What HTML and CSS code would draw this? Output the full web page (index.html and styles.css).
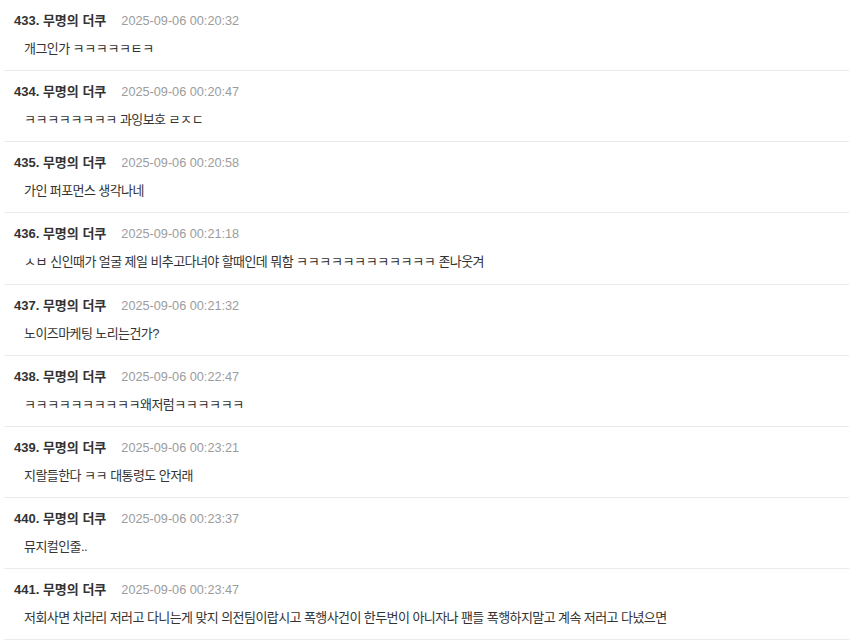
FILE: index.html
```html
<!DOCTYPE html>
<html lang="ko">
<head>
    <meta charset="UTF-8">
    <meta name="viewport" content="width=device-width, initial-scale=1.0">
    <title>댓글</title>
    <link rel="stylesheet" href="styles.css">
</head>
<body>
    <div class="comment-list">
        <div class="comment">
            <div class="comment-header"><span class="comment-name">433. 무명의 더쿠</span><span class="comment-date">2025-09-06 00:20:32</span></div>
            <div class="comment-body">개그인가 <span class="jamo">ㅋㅋㅋㅋㅋㅌㅋ</span></div>
        </div>
        <div class="comment">
            <div class="comment-header"><span class="comment-name">434. 무명의 더쿠</span><span class="comment-date">2025-09-06 00:20:47</span></div>
            <div class="comment-body"><span class="jamo">ㅋㅋㅋㅋㅋㅋㅋㅋ</span> 과잉보호 <span class="jamo">ㄹㅈㄷ</span></div>
        </div>
        <div class="comment">
            <div class="comment-header"><span class="comment-name">435. 무명의 더쿠</span><span class="comment-date">2025-09-06 00:20:58</span></div>
            <div class="comment-body">가인 퍼포먼스 생각나네</div>
        </div>
        <div class="comment">
            <div class="comment-header"><span class="comment-name">436. 무명의 더쿠</span><span class="comment-date">2025-09-06 00:21:18</span></div>
            <div class="comment-body"><span class="jamo">ㅅㅂ</span> 신인때가 얼굴 제일 비추고다녀야 할때인데 뭐함 <span class="jamo">ㅋㅋㅋㅋㅋㅋㅋㅋㅋㅋㅋㅋ</span> 존나웃겨</div>
        </div>
        <div class="comment">
            <div class="comment-header"><span class="comment-name">437. 무명의 더쿠</span><span class="comment-date">2025-09-06 00:21:32</span></div>
            <div class="comment-body">노이즈마케팅 노리는건가?</div>
        </div>
        <div class="comment">
            <div class="comment-header"><span class="comment-name">438. 무명의 더쿠</span><span class="comment-date">2025-09-06 00:22:47</span></div>
            <div class="comment-body"><span class="jamo">ㅋㅋㅋㅋㅋㅋㅋㅋㅋㅋ</span>왜저럼<span class="jamo">ㅋㅋㅋㅋㅋㅋ</span></div>
        </div>
        <div class="comment">
            <div class="comment-header"><span class="comment-name">439. 무명의 더쿠</span><span class="comment-date">2025-09-06 00:23:21</span></div>
            <div class="comment-body">지랄들한다 <span class="jamo">ㅋㅋ</span> 대통령도 안저래</div>
        </div>
        <div class="comment">
            <div class="comment-header"><span class="comment-name">440. 무명의 더쿠</span><span class="comment-date">2025-09-06 00:23:37</span></div>
            <div class="comment-body">뮤지컬인줄..</div>
        </div>
        <div class="comment">
            <div class="comment-header"><span class="comment-name">441. 무명의 더쿠</span><span class="comment-date">2025-09-06 00:23:47</span></div>
            <div class="comment-body">저회사면 차라리 저러고 다니는게 맞지 의전팀이랍시고 폭행사건이 한두번이 아니자나 팬들 폭행하지말고 계속 저러고 다녔으면</div>
        </div>
    </div>
</body>
</html>
```

FILE: styles.css
```css
body {
    margin: 0;
    background: #fff;
    font-family: "Liberation Sans", "Noto Sans CJK KR", sans-serif;
    color: #333;
}

.comment-list {
    margin-left: 4px;
}

.comment {
    padding: 11px 10px 11.125px;
    border-bottom: 1px solid #ebebeb;
}

.comment-header {
    display: flex;
    align-items: baseline;
    line-height: 20px;
}

.comment-name {
    font-size: 13px;
    font-weight: bold;
    color: #333;
}

.comment-date {
    margin-left: 15px;
    font-size: 12.7px;
    color: #9c9c9c;
}

.comment-body {
    margin-top: 8px;
    padding-left: 10px;
    font-size: 13px;
    letter-spacing: -0.58px;
    line-height: 20px;
    color: #333;
}

.jamo {
    letter-spacing: -0.35px;
}
```
